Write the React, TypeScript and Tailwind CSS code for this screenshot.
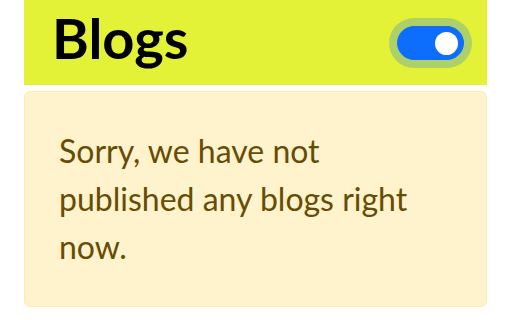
import React, { useState } from "react"

// Blogs panel: heading bar with a switch, then an empty-state notice
export default function App() {
	const [on, setOn] = useState(true)

	return (
		<div className="w-[512px] h-[320px] bg-white px-[24px] pr-[25px] font-['Lato','Liberation_Sans',sans-serif]">
			<div className="flex h-[85px] items-center justify-between bg-[#e3f237] pl-[28px] pr-[23px]">
				<h1 className="text-[56px] font-bold leading-none text-black pb-[9px]">Blogs</h1>
				<button
					type="button"
					onClick={() => setOn(!on)}
					className="flex h-[34px] w-[67px] items-center justify-end rounded-full border border-[#0d6efd] bg-[#0d6efd] pr-[5px] ring-[8px] ring-[#add168] mt-[1px]"
				>
					<span className="block h-[23px] w-[23px] rounded-full bg-white" />
				</button>
			</div>

			<div className="mt-[6px] h-[216px] rounded-[6px] border border-[#ffecb5] bg-[#fff3cd] pl-[34px] pr-[35px] pt-[35px]">
				<p className="text-[32px] leading-[48px] text-[#664d03]">
					Sorry, we have not published any blogs right now.
				</p>
			</div>
		</div>
	)
}
